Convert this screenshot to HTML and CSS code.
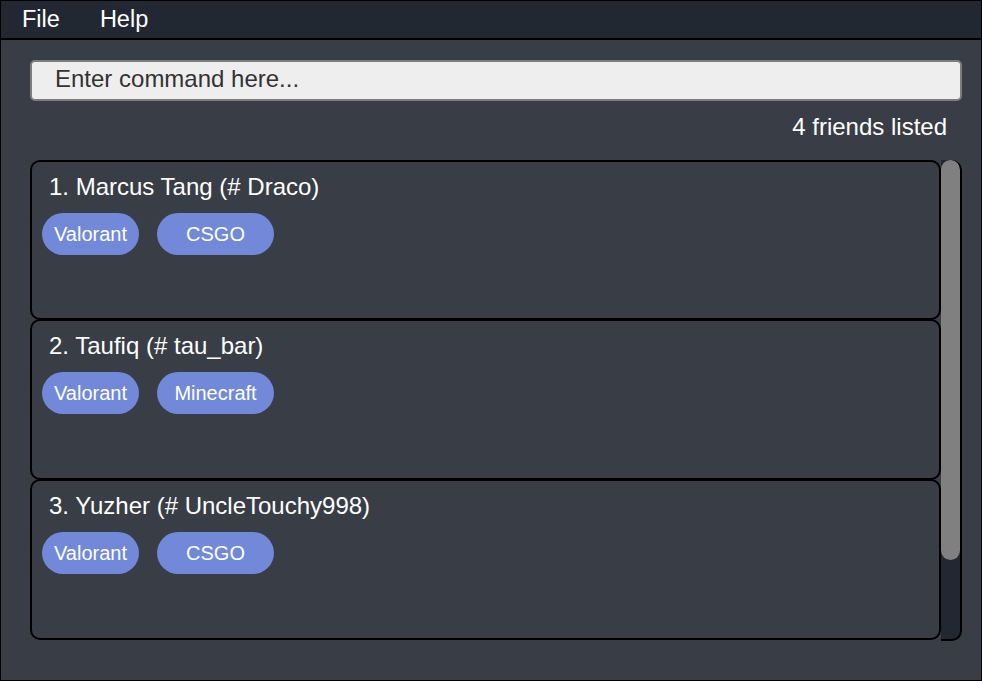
FILE: index.html
```html
<!DOCTYPE html>
<html lang="en">
<head>
<meta charset="utf-8">
<title>Friends</title>
<link rel="stylesheet" href="styles.css">
</head>
<body>
<div class="window">
  <nav class="menubar">
    <span class="menu-item">File</span>
    <span class="menu-item">Help</span>
  </nav>
  <main class="main">
    <input class="command-input" type="text" placeholder="Enter command here...">
    <div class="status">4 friends listed</div>
    <div class="list-panel">
      <div class="list">
        <div class="card">
          <div class="name">1. Marcus Tang (# Draco)</div>
          <div class="tags">
            <span class="tag">Valorant</span>
            <span class="tag tag-wide">CSGO</span>
          </div>
        </div>
        <div class="card">
          <div class="name">2. Taufiq (# tau_bar)</div>
          <div class="tags">
            <span class="tag">Valorant</span>
            <span class="tag tag-wide">Minecraft</span>
          </div>
        </div>
        <div class="card">
          <div class="name">3. Yuzher (# UncleTouchy998)</div>
          <div class="tags">
            <span class="tag">Valorant</span>
            <span class="tag tag-wide">CSGO</span>
          </div>
        </div>
      </div>
      <div class="scrollbar"><div class="thumb"></div></div>
    </div>
  </main>
</div>
</body>
</html>
```

FILE: styles.css
```css
* { box-sizing: border-box; }
html, body { margin: 0; padding: 0; }
body {
  font-family: "Liberation Sans", Arial, sans-serif;
  background: #393e46;
}
.window {
  width: 982px;
  height: 681px;
  border: 1px solid #000;
  display: flex;
  flex-direction: column;
  background: #393e46;
  overflow: hidden;
}
.menubar {
  height: 39px;
  flex: none;
  background: #222831;
  border-bottom: 2px solid #000;
  display: flex;
  gap: 40px;
  padding-left: 21px;
}
.menu-item {
  color: #fff;
  font-size: 23.5px;
  line-height: 28px;
  padding-top: 4px;
}
.main {
  flex: 1;
  display: flex;
  flex-direction: column;
  padding: 20px 19px 0 29px;
}
.command-input {
  display: block;
  width: 100%;
  height: 41px;
  margin: 0;
  border: 2px solid #7d7d7d;
  border-radius: 5px;
  background: #eeeeee;
  padding: 0 0 3px 23px;
  font-family: "Liberation Sans", Arial, sans-serif;
  font-size: 24px;
  color: #333;
  outline: none;
}
.command-input::placeholder { color: #333; opacity: 1; }
.status {
  color: #fff;
  font-size: 24px;
  line-height: 28px;
  text-align: right;
  padding: 12px 15px 19px 0;
}
.list-panel {
  display: flex;
  height: 481px;
}
.list {
  flex: 1;
  display: flex;
  flex-direction: column;
  overflow: hidden;
}
.card {
  flex: none;
  height: 160px;
  border: 2px solid #000;
  border-radius: 10px;
  padding: 11px 0 0 10px;
  background: #393e46;
}
.card + .card {
  margin-top: -1px;
  height: 161px;
}
.name {
  color: #fff;
  font-size: 24px;
  line-height: 28px;
  padding-left: 7px;
}
.tags {
  display: flex;
  gap: 18px;
  margin-top: 12px;
}
.tag {
  height: 42px;
  line-height: 42px;
  padding: 0 12px;
  border-radius: 21px;
  background: #7289da;
  color: #fff;
  font-size: 20px;
  text-align: center;
}
.tag-wide {
  width: 117px;
  padding: 0;
}
.scrollbar {
  width: 21px;
  flex: none;
  background: #222831;
  border-right: 2px solid #000;
  border-bottom: 2px solid #000;
  border-radius: 0 10px 10px 0;
  overflow: hidden;
}
.thumb {
  height: 400px;
  background: #808080;
  border-radius: 10px;
}
```
